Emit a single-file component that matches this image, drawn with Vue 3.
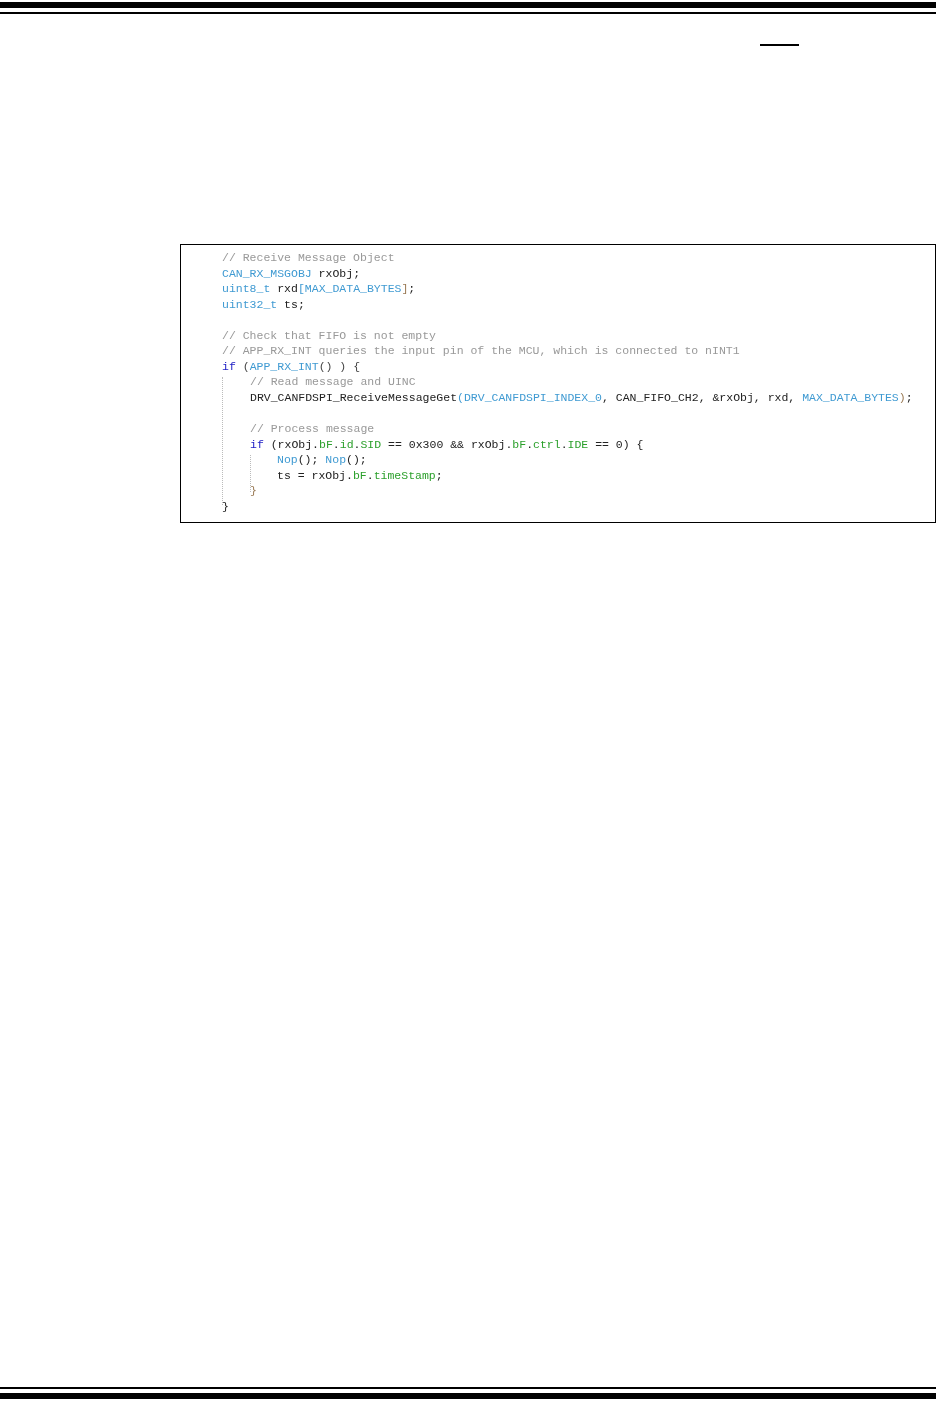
<script setup>
const c = 'c', k = 'k', t = 't', p = 'p', g = 'g', o = 'o', r = 'r'
const lines = [
  { i: 0, s: [['// Receive Message Object', c]] },
  { i: 0, s: [['CAN_RX_MSGOBJ', t], [' rxObj;', p]] },
  { i: 0, s: [['uint8_t', t], [' rxd', p], ['[', t], ['MAX_DATA_BYTES', t], [']', r], [';', p]] },
  { i: 0, s: [['uint32_t', t], [' ts;', p]] },
  { i: 0, s: [] },
  { i: 0, s: [['// Check that FIFO is not empty', c]] },
  { i: 0, s: [['// APP_RX_INT queries the input pin of the MCU, which is connected to nINT1', c]] },
  { i: 0, s: [['if', k], [' (', o], ['APP_RX_INT', t], ['() ) {', o]] },
  { i: 1, s: [['// Read message and UINC', c]] },
  { i: 1, s: [['DRV_CANFDSPI_ReceiveMessageGet', p], ['(', t], ['DRV_CANFDSPI_INDEX_0', t], [', ', p], ['CAN_FIFO_CH2', p], [', &rxObj, rxd, ', p], ['MAX_DATA_BYTES', t], [')', r], [';', p]] },
  { i: 1, s: [] },
  { i: 1, s: [['// Process message', c]] },
  { i: 1, s: [['if', k], [' (rxObj.', p], ['bF', g], ['.', p], ['id', g], ['.', p], ['SID', g], [' == 0x300 && rxObj.', p], ['bF', g], ['.', p], ['ctrl', g], ['.', p], ['IDE', g], [' == 0) {', p]] },
  { i: 2, s: [['Nop', t], ['(); ', p], ['Nop', t], ['();', p]] },
  { i: 2, s: [['ts = rxObj.', p], ['bF', g], ['.', p], ['timeStamp', g], [';', p]] },
  { i: 1, s: [['}', r]] },
  { i: 0, s: [['}', p]] },
]
</script>

<template>
  <div class="page">
    <header class="rules">
      <div class="thick"></div>
      <div class="thin"></div>
    </header>
    <div class="mark-row"><span class="mark"></span></div>
    <main class="figure">
      <div class="code">
        <div class="listing">
          <div v-for="(l, n) in lines" :key="n" class="line" :class="'indent' + l.i">
            <span v-for="(s, m) in l.s" :key="m" :class="s[1]">{{ s[0] }}</span>
          </div>
          <span class="guide guide-a"></span>
          <span class="guide guide-b"></span>
        </div>
      </div>
    </main>
    <footer class="rules bottom">
      <div class="thin"></div>
      <div class="thick"></div>
    </footer>
  </div>
</template>

<style>
html, body { margin: 0; background: #fff; }
</style>

<style scoped>
.page { width: 936px; height: 1415px; display: flex; flex-direction: column; background: #fff; overflow: hidden; }
.rules { display: flex; flex-direction: column; gap: 4px; padding-top: 2px; }
.thick { height: 6px; background: #000; }
.thin { height: 2px; background: #000; }
.mark-row { display: flex; justify-content: flex-end; padding: 30px 137px 0 0; }
.mark { width: 39px; height: 2px; background: #000; }
.figure { margin: 198px 0 0 180px; }
.code { box-sizing: border-box; width: 756px; height: 279px; border: 1px solid #000; padding: 5px 0 0 41px; }
.listing { position: relative; filter: blur(0.45px); font-family: "Liberation Mono", monospace; font-size: 11.5px; line-height: 15.56px; white-space: pre; }
.line { height: 15.56px; }
.indent1 { padding-left: 28px; }
.indent2 { padding-left: 55px; }
.c { color: #999; }
.k { color: #1c1cc4; }
.t { color: #3f9ad2; }
.p { color: #222; }
.g { color: #2ca02c; }
.o { color: #444; }
.r { color: #9a7a55; }
.guide { position: absolute; border-left: 1px dotted #bbb; }
.guide-a { left: 0; top: 127px; height: 128px; }
.guide-b { left: 28px; top: 205px; height: 37px; }
.bottom { margin-top: auto; padding: 0 0 16px; }
</style>
